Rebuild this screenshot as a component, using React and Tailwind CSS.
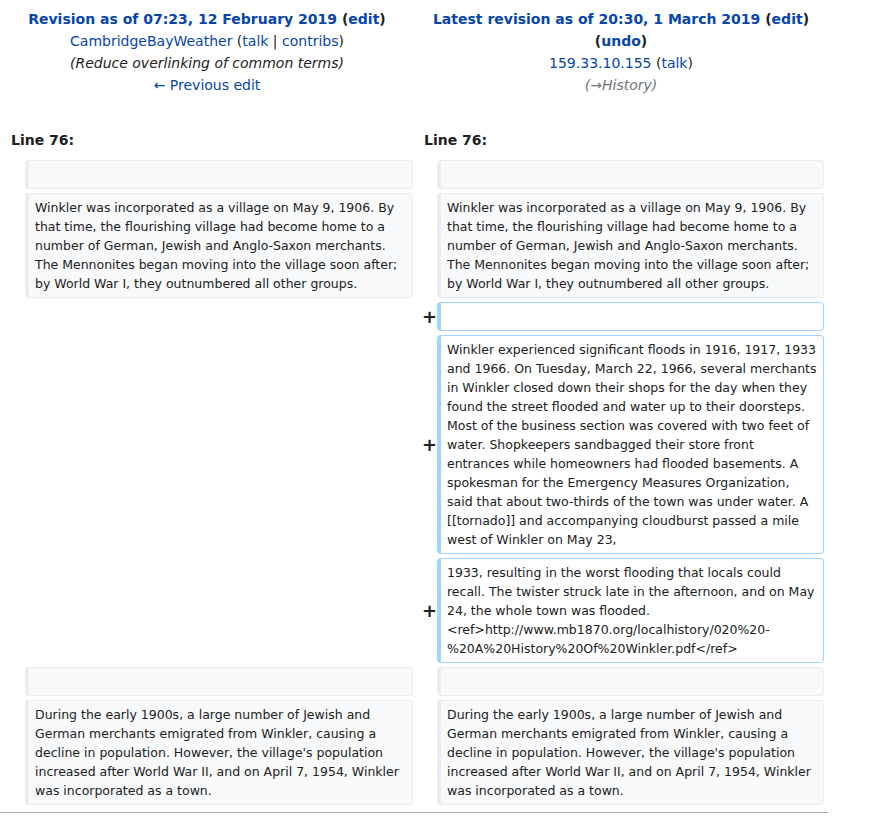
import React from "react";

const ctx =
  "bg-[#f8f9fa] border border-[#eaecf0] border-l-4 rounded-[4px] px-[6px] py-[4px] text-[12.5px] leading-[19px] text-[#202122] min-h-[29px]";
const add =
  "bg-white border border-[#a3d3ff] border-l-4 rounded-[4px] px-[6px] py-[4px] text-[12.5px] leading-[19px] text-[#202122] min-h-[29px]";

function Marker({ plus }) {
  return (
    <div className="w-[16px] shrink-0 flex items-center justify-end">
      {plus ? (
        <span className="font-bold text-[18px] leading-none text-[#202122] -mr-[4px]">+</span>
      ) : null}
    </div>
  );
}

function ContextRow({ text }) {
  return (
    <div className="flex gap-[4px] items-stretch">
      <div className="w-[17px] shrink-0" />
      <div className={`w-[388px] shrink-0 ${ctx}`}>{text}</div>
      <div className="w-[16px] shrink-0" />
      <div className={`w-[387px] shrink-0 ${ctx}`}>{text}</div>
    </div>
  );
}

function AddedRow({ text }) {
  return (
    <div className="flex gap-[4px] items-stretch">
      <div className="w-[17px] shrink-0" />
      <div className="w-[388px] shrink-0" />
      <Marker plus />
      <div className={`w-[387px] shrink-0 ${add}`}>{text}</div>
    </div>
  );
}

const p1 =
  "Winkler was incorporated as a village on May 9, 1906. By that time, the flourishing village had become home to a number of German, Jewish and Anglo-Saxon merchants. The Mennonites began moving into the village soon after; by World War I, they outnumbered all other groups.";
const p2 =
  "Winkler experienced significant floods in 1916, 1917, 1933 and 1966. On Tuesday, March 22, 1966, several merchants in Winkler closed down their shops for the day when they found the street flooded and water up to their doorsteps. Most of the business section was covered with two feet of water. Shopkeepers sandbagged their store front entrances while homeowners had flooded basements. A spokesman for the Emergency Measures Organization, said that about two-thirds of the town was under water. A [[tornado]] and accompanying cloudburst passed a mile west of Winkler on May 23,";
const p3 =
  "1933, resulting in the worst flooding that locals could recall. The twister struck late in the afternoon, and on May 24, the whole town was flooded. <ref>http://www.mb1870.org/localhistory/020%20-%20A%20History%20Of%20Winkler.pdf</ref>";
const p4 =
  "During the early 1900s, a large number of Jewish and German merchants emigrated from Winkler, causing a decline in population. However, the village's population increased after World War II, and on April 7, 1954, Winkler was incorporated as a town.";

export default function App() {
  return (
    <div className="w-[874px] min-h-[829px] bg-white font-['DejaVu_Sans',sans-serif] text-[#202122]">
      <div className="w-[828px]">
        {/* header */}
        <div className="flex pt-[8px] text-[14px] leading-[22px] text-center">
          <div className="w-[414px] flex flex-col items-center">
            <div className="font-bold">
              <span className="text-[#0645ad]">Revision as of 07:23, 12 February 2019</span>{" "}
              <span>
                (<span className="text-[#0645ad]">edit</span>)
              </span>
            </div>
            <div>
              <span className="text-[#0645ad]">CambridgeBayWeather</span> (
              <span className="text-[#0645ad]">talk</span> |{" "}
              <span className="text-[#0645ad]">contribs</span>)
            </div>
            <div className="italic">(Reduce overlinking of common terms)</div>
            <div className="text-[#0645ad]">← Previous edit</div>
          </div>
          <div className="w-[414px] flex flex-col items-center">
            <div className="font-bold">
              <span className="text-[#0645ad]">Latest revision as of 20:30, 1 March 2019</span>{" "}
              <span>
                (<span className="text-[#0645ad]">edit</span>)
              </span>
            </div>
            <div className="font-bold">
              (<span className="text-[#0645ad]">undo</span>)
            </div>
            <div>
              <span className="text-[#0645ad]">159.33.10.155</span> (
              <span className="text-[#0645ad]">talk</span>)
            </div>
            <div className="italic text-[#72777d]">(→History)</div>
          </div>
        </div>

        {/* line numbers */}
        <div className="flex mt-[33px] text-[14px] leading-[22px] font-bold">
          <div className="w-[413px] pl-[11px]">Line 76:</div>
          <div className="pl-[11px]">Line 76:</div>
        </div>

        {/* diff rows */}
        <div className="flex flex-col gap-[4px] px-[4px] mt-[9px]">
          <ContextRow text="" />
          <ContextRow text={p1} />
          <AddedRow text="" />
          <AddedRow text={p2} />
          <AddedRow text={p3} />
          <ContextRow text="" />
          <ContextRow text={p4} />
        </div>
        <div className="mt-[7px] h-px bg-[#a2a9b1]" />
      </div>
    </div>
  );
}
